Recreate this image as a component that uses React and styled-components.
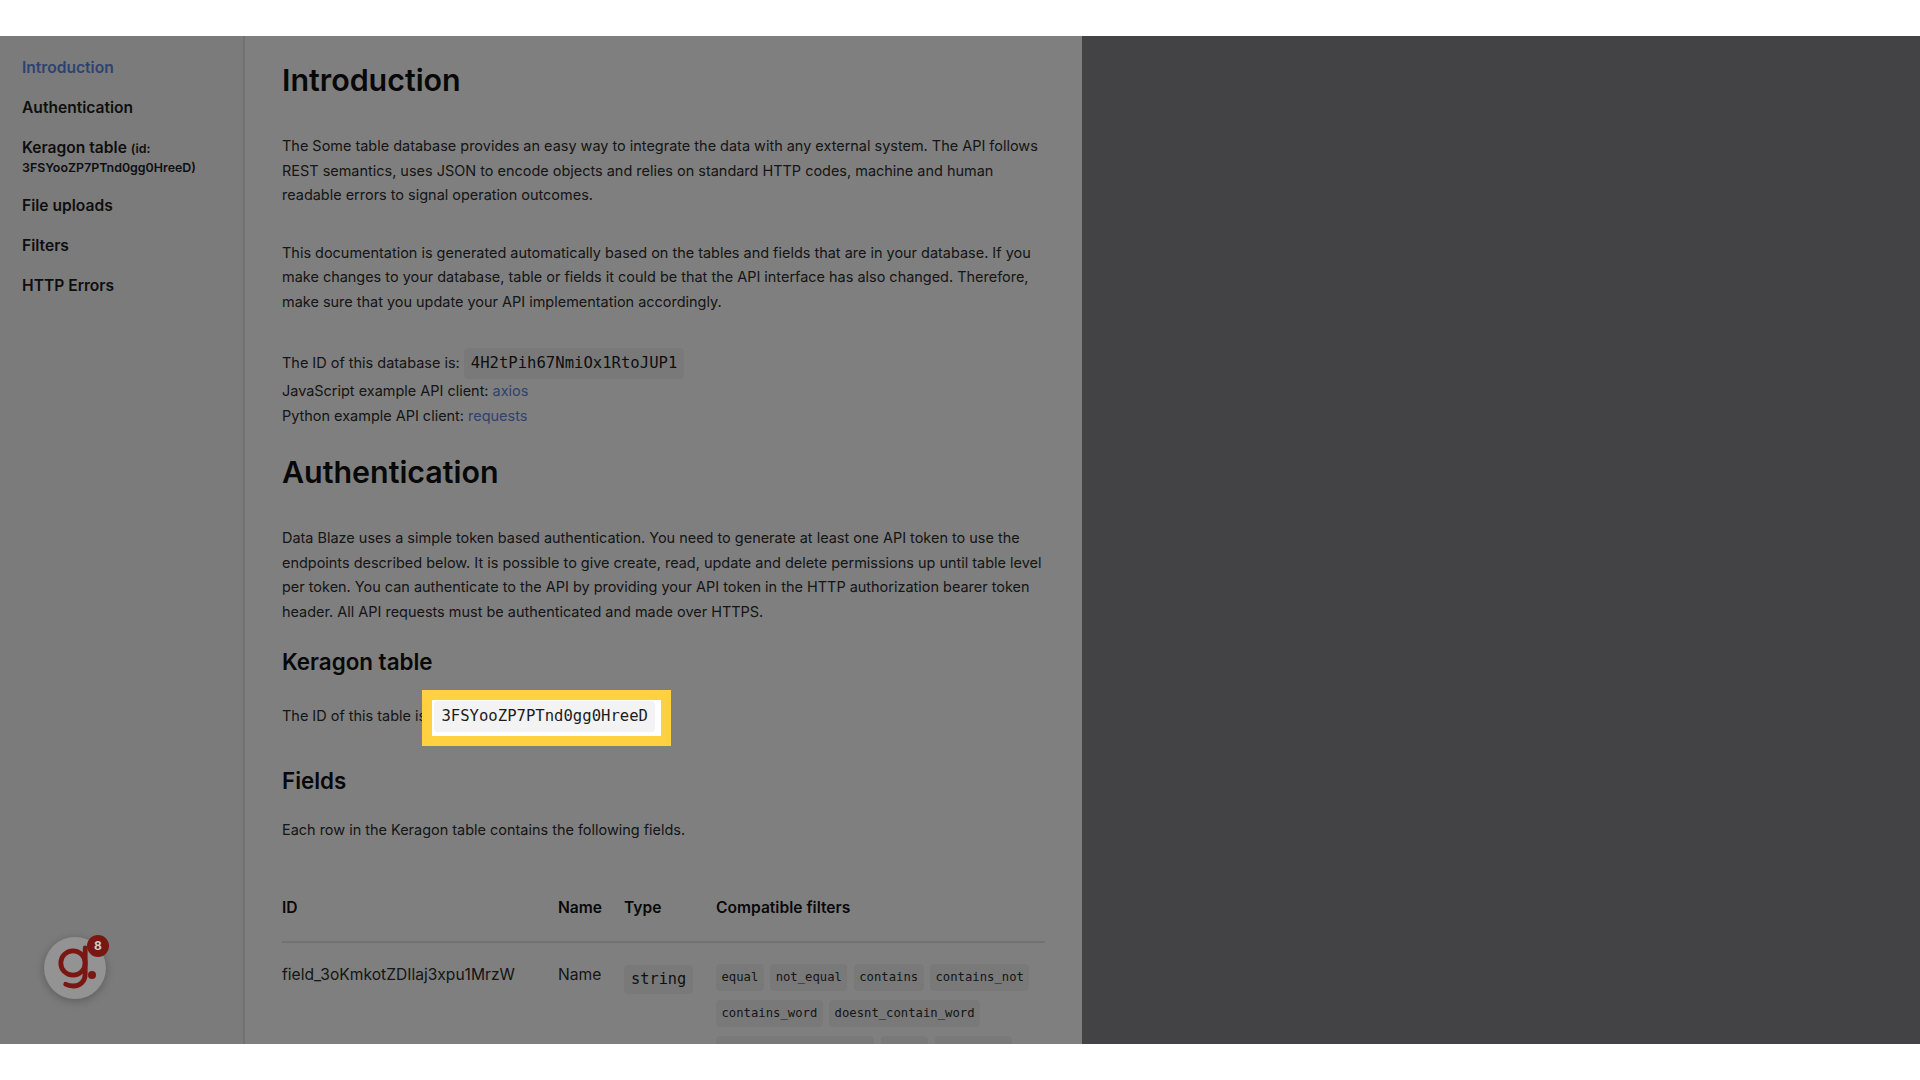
import React from "react";
import styled, { createGlobalStyle } from "styled-components";

const navItems = ["Authentication"];
const moreNavItems = ["File uploads", "Filters", "HTTP Errors"];
const filters = [
  "equal",
  "not_equal",
  "contains",
  "contains_not",
  "contains_word",
  "doesnt_contain_word",
  "length_is_lower_than",
  "empty",
  "not_empty",
];

const App = () => {
  return (
    <>
      <GlobalStyle />
      <Frame>
        <Sidebar>
          <NavLink href="#intro" $active>
            Introduction
          </NavLink>
          {navItems.map((item) => (
            <NavLink href="#" key={item}>
              {item}
            </NavLink>
          ))}
          <TableNavLink href="#">
            Keragon table <small>(id: 3FSYooZP7PTnd0gg0HreeD)</small>
          </TableNavLink>
          {moreNavItems.map((item) => (
            <NavLink href="#" key={item}>
              {item}
            </NavLink>
          ))}
        </Sidebar>

        <Content>
          <Title id="intro">Introduction</Title>
          <Para>
            The Some table database provides an easy way to integrate the data with any external
            system. The API follows REST semantics, uses JSON to encode objects and relies on
            standard HTTP codes, machine and human readable errors to signal operation outcomes.
          </Para>
          <Para>
            This documentation is generated automatically based on the tables and fields that are
            in your database. If you make changes to your database, table or fields it could be
            that the API interface has also changed. Therefore, make sure that you update your API
            implementation accordingly.
          </Para>
          <InfoBlock>
            <div>
              The ID of this database is: <Code>4H2tPih67NmiOx1RtoJUP1</Code>
            </div>
            <div>
              JavaScript example API client: <TextLink href="#">axios</TextLink>
            </div>
            <div>
              Python example API client: <TextLink href="#">requests</TextLink>
            </div>
          </InfoBlock>

          <Title>Authentication</Title>
          <Para>
            Data Blaze uses a simple token based authentication. You need to generate at least one
            API token to use the endpoints described below. It is possible to give create, read,
            update and delete permissions up until table level per token. You can authenticate to
            the API by providing your API token in the HTTP authorization bearer token header. All
            API requests must be authenticated and made over HTTPS.
          </Para>

          <SubTitle>Keragon table</SubTitle>
          <TableIdLine>
            The ID of this table is:{" "}
            <Spotlight>
              <Code>3FSYooZP7PTnd0gg0HreeD</Code>
            </Spotlight>
          </TableIdLine>

          <SubTitle>Fields</SubTitle>
          <Para>Each row in the Keragon table contains the following fields.</Para>

          <FieldsTable>
            <thead>
              <tr>
                <th>ID</th>
                <th>Name</th>
                <th>Type</th>
                <th>Compatible filters</th>
              </tr>
            </thead>
            <tbody>
              <tr>
                <td>field_3oKmkotZDIlaj3xpu1MrzW</td>
                <td>Name</td>
                <td>
                  <TypeCode>string</TypeCode>
                </td>
                <td>
                  <ChipList>
                    {filters.map((name) => (
                      <FilterChip key={name}>{name}</FilterChip>
                    ))}
                  </ChipList>
                </td>
              </tr>
            </tbody>
          </FieldsTable>
        </Content>

        <ExamplesPane />
        <Dimmer />

        <ChatBubble>
          <svg width="62" height="62" viewBox="0 0 62 62" fill="none">
            <circle cx="29" cy="26" r="12.2" stroke="#7a1712" strokeWidth="4.8" />
            <path
              d="M41.2 11v26c0 7.500-5 12-12 12-3 0-5.500-.6-7.500-1.800"
              stroke="#7a1712"
              strokeWidth="4.8"
              strokeLinecap="round"
            />
            <circle cx="48" cy="38" r="4" fill="#7a1712" />
          </svg>
          <Badge>8</Badge>
        </ChatBubble>
      </Frame>
    </>
  );
};

const GlobalStyle = createGlobalStyle`
  body {
    margin: 0;
    background: #fff;
    font-family: Inter, "Liberation Sans", sans-serif;
  }
`;

const Frame = styled.div`
  position: relative;
  display: flex;
  height: 1008px;
  margin: 36px 0;
  overflow: hidden;
`;

//----SIDE NAV----
const Sidebar = styled.nav`
  flex: 0 0 245px;
  box-sizing: border-box;
  display: flex;
  flex-direction: column;
  gap: 16px;
  padding: 20px 22px;
  background: #f7f7f7;
  border-right: 2px solid #e4e4e4;
`;

const NavLink = styled.a`
  display: block;
  font-size: 15.6px;
  font-weight: 600;
  line-height: 24px;
  color: ${(props) => (props.$active ? "#5b85e0" : "#1c1c1c")};
  text-decoration: none;
`;

const TableNavLink = styled(NavLink)`
  margin: 3px 0 1px;
  line-height: 18px;

  small {
    font-size: 12.4px;
  }
`;

//----DOCS----
const Content = styled.main`
  flex: 0 0 837px;
  box-sizing: border-box;
  padding: 0 37px;
  background: #fff;
  color: #2c2c2c;
  font-size: 14.46px;
  line-height: 24.5px;
`;

const Title = styled.h1`
  margin: 21.5px 0 32.5px;
  font-size: 30.4px;
  font-weight: 600;
  line-height: 44px;
  color: #111;
`;

const SubTitle = styled.h2`
  margin: 0;
  font-size: 22.4px;
  font-weight: 600;
  line-height: 32px;
  color: #111;
`;

const Para = styled.p`
  margin: 0 0 22px;

  & + & {
    margin-top: 33px;
  }

  ${SubTitle} + & {
    margin-top: 21px;
    margin-bottom: 34px;
  }
`;

const InfoBlock = styled.div`
  margin-top: 34px;
`;

const TableIdLine = styled.div`
  margin: 22.5px 0 33px;
`;

const Code = styled.code`
  display: inline-block;
  padding: 3px 7px;
  background: #f3f3f3;
  border-radius: 4px;
  font-family: "DejaVu Sans Mono", monospace;
  font-size: 15.6px;
  line-height: 25px;
  color: #1c1c1c;
`;

const Spotlight = styled.span`
  position: relative;
  z-index: 2;
  display: inline-block;

  &::before {
    content: "";
    position: absolute;
    z-index: -1;
    inset: -11px -16px -14px -12px;
    background: #fff;
    border: 10px solid #ffd040;
  }
`;

const TextLink = styled.a`
  color: #5b85e0;
  text-decoration: none;
`;

const FieldsTable = styled.table`
  width: 100%;
  border-collapse: collapse;
  table-layout: fixed;
  font-size: 15.6px;

  th {
    padding: 20px 0;
    text-align: left;
    font-weight: 600;
    color: #111;
    border-bottom: 2px solid #e4e4e4;
  }

  td {
    padding: 20px 0;
    vertical-align: top;
  }

  th:nth-child(1) {
    width: 276px;
  }
  th:nth-child(2) {
    width: 66px;
  }
  th:nth-child(3) {
    width: 92px;
  }
`;

const TypeCode = styled(Code)`
  margin-top: 2px;
  font-size: 15.3px;
  line-height: 23px;
`;

const ChipList = styled.div`
  display: flex;
  flex-wrap: wrap;
  gap: 9px 6.3px;
  margin-top: 1px;
`;

const FilterChip = styled.code`
  padding: 1px 5.5px;
  background: #f3f3f3;
  border-radius: 4px;
  font-family: "DejaVu Sans Mono", monospace;
  font-size: 12.24px;
  line-height: 25px;
`;

const ExamplesPane = styled.aside`
  flex: 1;
  background: #86868a;
`;

//----TOUR OVERLAY----
const Dimmer = styled.div`
  position: absolute;
  inset: 0;
  z-index: 1;
  background: rgba(0, 0, 0, 0.5);
`;

const ChatBubble = styled.div`
  position: absolute;
  z-index: 2;
  left: 44px;
  top: 901px;
  width: 62px;
  height: 62px;
  border-radius: 50%;
  background: #939393;
  box-shadow: 0 2px 8px rgba(0, 0, 0, 0.25);
`;

const Badge = styled.span`
  position: absolute;
  top: -2px;
  right: -3px;
  width: 22px;
  height: 22px;
  border-radius: 50%;
  background: #7a1712;
  color: #ccc;
  font-size: 12px;
  font-weight: 700;
  line-height: 22px;
  text-align: center;
`;

export default App;
